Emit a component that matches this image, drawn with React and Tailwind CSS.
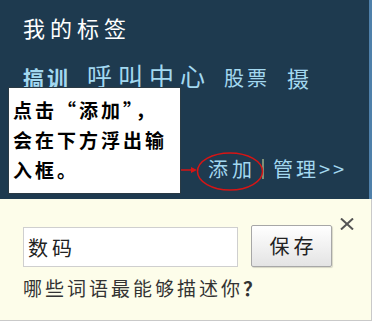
const cjk = { fontFamily: '"Noto Sans CJK SC", "Noto Sans", sans-serif' };

export default function App() {
  return (
    <div className="relative w-[374px] h-[322px] bg-white overflow-hidden" style={cjk}>
      <div className="w-[372px]">
        {/* dark tag panel */}
        <div className="h-[199px] bg-[#1e3a4f] border-r-[3px] border-[#4f80aa] pl-[23px] pt-[16px]">
          <h2 className="text-[22px] leading-[22px] tracking-[5px] text-white">我的标签</h2>
          <div className="mt-[25px] flex items-end text-[#a3d8f0]">
            <span className="text-[21px] leading-[21px] tracking-[3px] font-bold">搞训</span>
            <span className="ml-[16px] text-[25px] leading-[25px] tracking-[6px]">呼叫中心</span>
            <span className="ml-[13px] text-[20px] leading-[20px] tracking-[3px]">股票</span>
            <span className="ml-[17px] text-[22px] leading-[22px]">摄</span>
          </div>
          <div className="mt-[71px] ml-[185px] flex items-center text-[20px] leading-[20px] text-[#a3d8f0]">
            <span className="tracking-[4px]">添加</span>
            <span className="ml-[6px] mr-[9px] w-[2px] h-[20px] bg-[#7d8f78]"></span>
            <span className="tracking-[3px]">管理&gt;&gt;</span>
          </div>
        </div>

        {/* add tag form */}
        <div className="relative h-[122px] bg-[#fdfdea] border-r border-b border-[#c9c9c9] pl-[23px] pt-[26px]">
          <button className="absolute left-[340px] top-[19px] w-[14px] h-[12px] text-[#555]">
            <svg viewBox="0 0 14 12" className="w-[14px] h-[12px]">
              <path d="M1 0.5 L13 11.5 M13 0.5 L1 11.5" stroke="currentColor" strokeWidth="2" />
            </svg>
          </button>
          <div className="flex items-end">
            <input
              readOnly
              defaultValue="数码"
              className="w-[215px] h-[40px] bg-white border border-[#cfcfcf] pl-[4px] text-[20px] tracking-[4px] text-[#222] outline-none"
              style={cjk}
            />
            <button className="ml-[13px] w-[81px] h-[42px] rounded-[2px] border border-[#a7a7a7] bg-gradient-to-b from-white to-[#e4e4e4] text-[20px] tracking-[4px] pl-[4px] text-[#222] shadow-[1px_1px_1px_rgba(0,0,0,0.15)]">
              保存
            </button>
          </div>
          <p className="mt-[11px] text-[19px] leading-[19px] tracking-[3px] text-[#333]">哪些词语最能够描述你<span className="font-bold">？</span></p>
        </div>
      </div>

      {/* annotation callout */}
      <div className="absolute left-[8px] top-[87px] w-[173px] h-[107px] bg-white border border-[#2a3a44] pl-[4px] pt-[7px] text-[19px] leading-[30px] font-bold tracking-[3px] text-black">
        <p>点击“添加”，</p>
        <p>会在下方浮出输</p>
        <p>入框。</p>
      </div>
      <svg className="absolute left-0 top-0 pointer-events-none" width="374" height="322">
        <ellipse cx="230" cy="171.5" rx="32.5" ry="18.5" fill="none" stroke="#d61515" strokeWidth="1.5" />
        <line x1="181" y1="170" x2="193" y2="170" stroke="#d61515" strokeWidth="1.5" />
        <path d="M191 167 L197 170 L191 173 Z" fill="#d61515" />
      </svg>
    </div>
  );
}
